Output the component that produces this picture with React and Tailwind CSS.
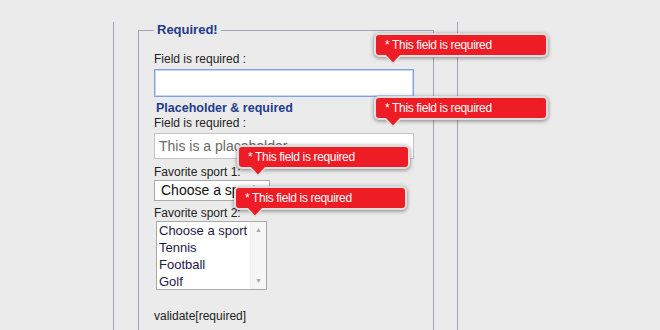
import React from "react";

const sports = ["Choose a sport", "Tennis", "Football", "Golf"];

function Tip({ left, top, width, arrow }) {
  return (
    <div className="absolute" style={{ left, top, width }}>
      <div className="relative h-[24px] rounded-[5px] border-2 border-[#dedede] bg-[#ee1c24] pl-[9px] text-[12px] leading-[20px] tracking-[-0.35px] text-white shadow-[0_1px_4px_rgba(0,0,0,0.45)]">
        * This field is required
      </div>
      <svg className="absolute top-[20px]" style={{ left: arrow - 11 }} width="22" height="12" viewBox="0 0 22 12">
        <polygon points="1,0 11,10.5 21,0" fill="#ee1c24" stroke="#dedede" strokeWidth="1.6" />
        <rect x="0" y="0" width="22" height="2" fill="#ee1c24" />
      </svg>
    </div>
  );
}

export default function App() {
  return (
    <div className="relative h-[330px] w-[660px] overflow-hidden bg-[#ebebeb] font-['Liberation_Sans',Arial,sans-serif] text-[12px] text-[#222]">
      {/* Page column */}
      <div className="ml-[113px] h-full w-[345px] border-x border-[#a4a4b8] pl-[24px]">
        <fieldset className="mt-[22px] h-[400px] w-[296px] border border-[#a4a4b8] px-[15px] pt-[14px]">
          <legend className="px-[3px] text-[13px] font-bold leading-[16px] text-[#1e3c8c]">
            Required!
          </legend>

          <div className="leading-[14px]">Field is required :</div>
          <div className="mt-[3px] h-[28px] w-[260px] border border-[#7fa2e2] bg-white shadow-[inset_0_0_0_1px_#c6d6f4]" />

          <div className="mt-[3px] ml-[2px] text-[12.5px] font-bold leading-[16px] text-[#1e3c8c]">
            Placeholder &amp; required
          </div>
          <div className="leading-[14px]">Field is required :</div>
          <div className="mt-[3px] flex h-[26px] w-[260px] items-center border border-[#c4c4c4] bg-white pl-[4px] text-[14px] text-[#6a6a6a]">
            This is a placeholder
          </div>

          <div className="mt-[6px] leading-[14px]">Favorite sport 1:</div>
          <div className="mt-[1px] flex h-[21px] w-[116px] items-center justify-between overflow-hidden whitespace-nowrap border border-[#aaaaaa] bg-white pl-[6px] pr-[6px] text-[14px] leading-[19px] text-[#111]">
            <span>Choose a sport</span>
            <span className="text-[9px] text-[#444]">▼</span>
          </div>

          <div className="mt-[5px] leading-[14px]">Favorite sport 2:</div>
          <div className="mt-[1px] ml-[2px] flex h-[69px] w-[111px] border border-[#aaaaaa] bg-white">
            <div className="flex-1 pl-[2px] text-[13px] leading-[17px] text-[#1e1848]">
              {sports.map((s) => (
                <div key={s} className="whitespace-nowrap">{s}</div>
              ))}
            </div>
            <div className="flex w-[16px] flex-col items-center justify-between border-l border-[#f0f0f0] bg-[#f6f6f6] py-[4px] text-[7px] leading-[8px] text-[#a8a8a8]">
              <span>▲</span>
              <span>▼</span>
            </div>
          </div>

          <div className="mt-[19px] leading-[14px]">validate[required]</div>
        </fieldset>
      </div>

      {/* Error prompts */}
      <Tip left={374} top={33} width={174} arrow={19} />
      <Tip left={374} top={96} width={174} arrow={19} />
      <Tip left={237} top={145} width={173} arrow={21} />
      <Tip left={234} top={186} width={173} arrow={21} />
    </div>
  );
}
